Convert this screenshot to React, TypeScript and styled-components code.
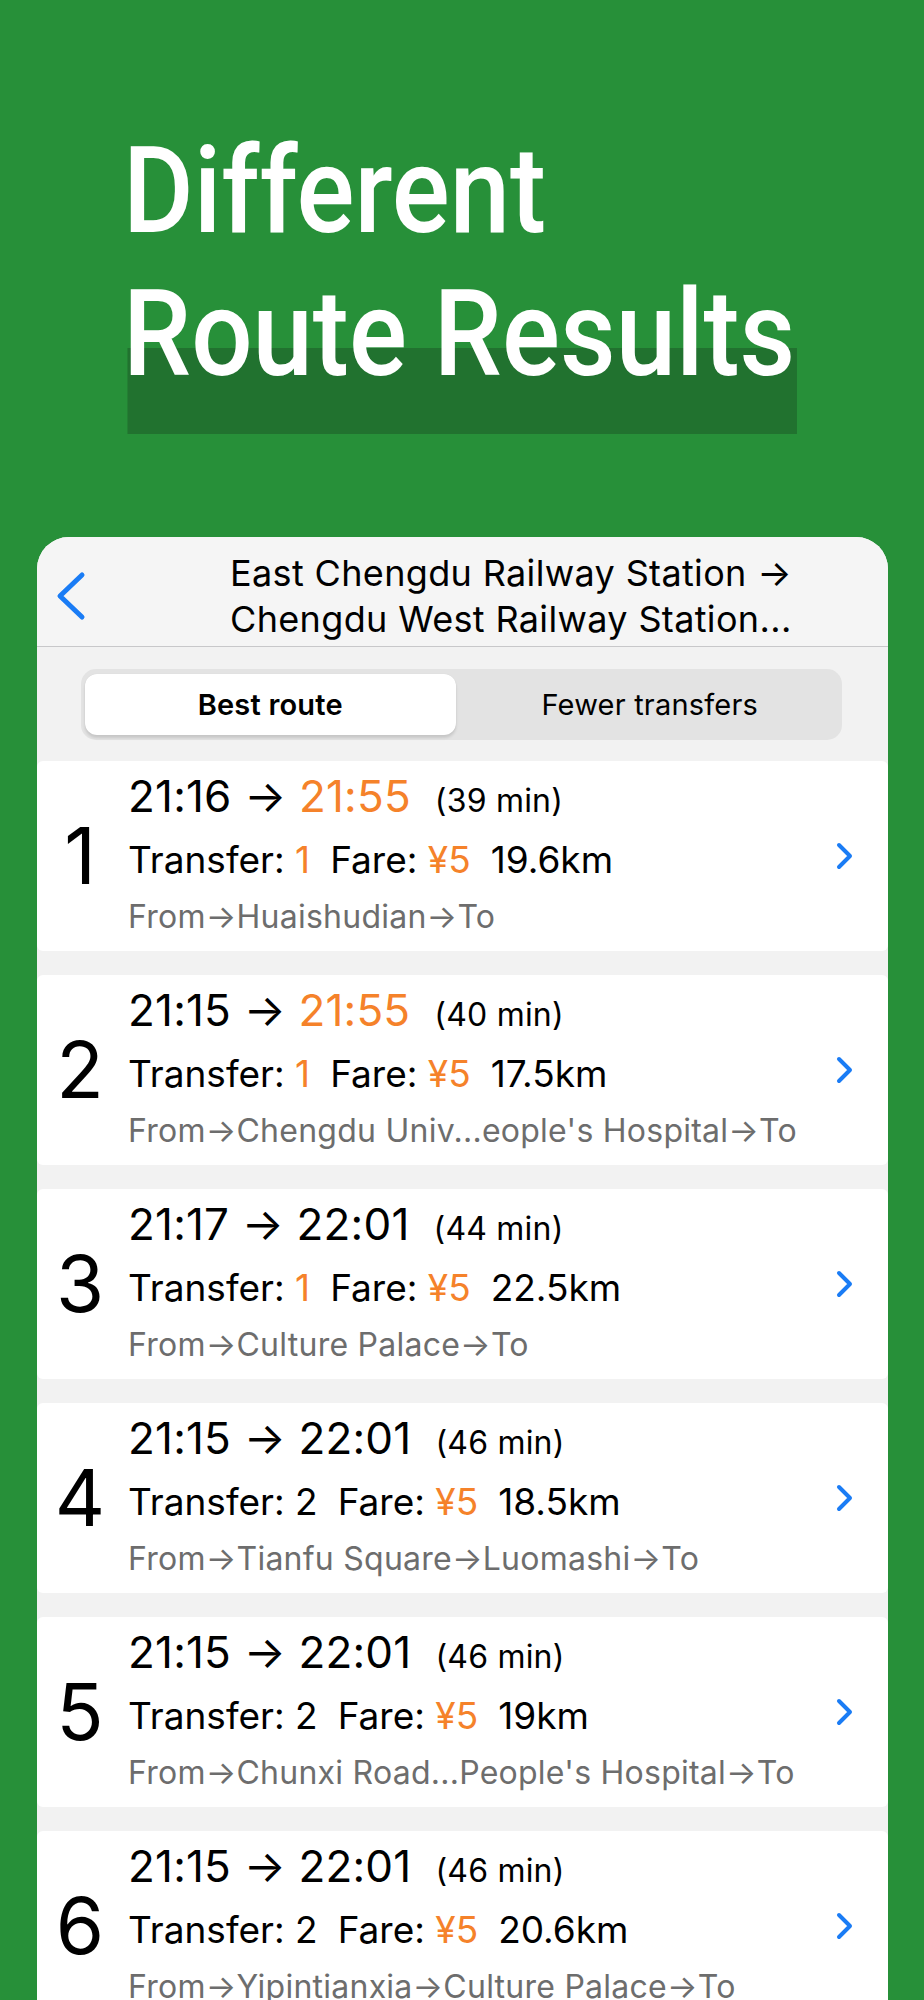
import React from "react";
import styled, { createGlobalStyle } from "styled-components";

const GlobalStyle = createGlobalStyle`
  html, body { margin: 0; padding: 0; }
  body { background: #279039; font-family: Inter, "Noto Sans", sans-serif; }
  * { box-sizing: border-box; }
`;

const Page = styled.div`
  width: 924px;
  height: 2000px;
  overflow: hidden;
  background: #279039;
  display: flex;
  flex-direction: column;
`;

const Hero = styled.div`
  padding: 120px 0 0 123px;
  height: 537px;
`;

const HeroTitle = styled.h1`
  margin: 0;
  font-family: Roboto, "Liberation Sans", Arial, sans-serif;
  font-weight: 500;
  font-size: 121px;
  line-height: 143px;
  color: #ffffff;
  display: flex;
  flex-direction: column;
  align-items: flex-start;
  transform: scaleX(0.895);
  transform-origin: left top;
`;

const HeroLine = styled.span<{ $marked?: boolean }>`
  position: relative;
  display: inline-block;
  white-space: nowrap;
  z-index: 0;
  &::before {
    content: "";
    display: ${(p) => (p.$marked ? "block" : "none")};
    position: absolute;
    left: 5px;
    right: -2px;
    top: 85px;
    height: 86px;
    background: #21722f;
    z-index: -1;
  }
`;

const Card = styled.div`
  margin: 0 36px 0 37px;
  flex: 1;
  background: #f2f2f2;
  border-radius: 32px 32px 0 0;
  overflow: hidden;
  display: flex;
  flex-direction: column;
`;

const NavBar = styled.div`
  display: flex;
  align-items: center;
  background: #f5f5f5;
  border-bottom: 1.5px solid #c8c8ca;
  padding: 13px 0 4px 18px;
`;

const BackButton = styled.div`
  width: 175px;
  display: flex;
  align-items: center;
`;

const NavTitle = styled.div`
  font-size: 36px;
  line-height: 46px;
  color: #000;
  letter-spacing: 0.35px;
  white-space: nowrap;
`;

const SegmentWrap = styled.div`
  padding: 22px 46px 21px 44px;
`;

const Segmented = styled.div`
  display: grid;
  grid-template-columns: 1fr 1fr;
  height: 71px;
  background: #e3e3e3;
  border-radius: 15px;
  padding: 5px 4px;
`;

const Segment = styled.div<{ $active?: boolean }>`
  display: flex;
  align-items: center;
  justify-content: center;
  border-radius: 12px;
  font-size: 29px;
  font-weight: ${(p) => (p.$active ? 600 : 400)};
  color: #000;
  background: ${(p) => (p.$active ? "#ffffff" : "transparent")};
  box-shadow: ${(p) => (p.$active ? "0 3px 3px rgba(0,0,0,0.12), 0 0 1px rgba(0,0,0,0.1)" : "none")};
  margin-right: ${(p) => (p.$active ? "6px" : "0")};
  letter-spacing: 0.2px;
`;

const List = styled.div`
  display: flex;
  flex-direction: column;
  gap: 24px;
`;

const Row = styled.div`
  height: 190px;
  background: #ffffff;
  border-radius: 6px;
  display: flex;
  align-items: center;
`;

const Index = styled.div`
  width: 86px;
  flex: none;
  text-align: center;
  font-size: 78px;
  line-height: 1;
  color: #000;
  margin-right: 5px;
`;

const Info = styled.div`
  flex: 1;
  display: flex;
  flex-direction: column;
  margin-top: -2px;
`;

const TimeLine = styled.div`
  font-size: 44px;
  line-height: 56px;
  color: #000;
  white-space: nowrap;
  letter-spacing: 0.2px;
`;

const Duration = styled.span`
  font-size: 32px;
  margin-left: 24px;
  letter-spacing: 0.2px;
`;

const StatsLine = styled.div`
  font-size: 37px;
  line-height: 62px;
  color: #000;
  white-space: nowrap;
  letter-spacing: 0px;
`;

const Stat = styled.span`
  & + & { margin-left: 20px; }
`;

const Accent = styled.span<{ $on?: boolean }>`
  color: ${(p) => (p.$on ? "#f5822a" : "inherit")};
`;

const PathLine = styled.div`
  font-size: 32px;
  line-height: 52px;
  color: #6d6d6d;
  white-space: nowrap;
  letter-spacing: 0.25px;
`;

const Chevron = styled.div`
  width: 53px;
  flex: none;
  display: flex;
  align-items: center;
`;

type Route = {
  dep: string;
  arr: string;
  arrLate: boolean;
  dur: string;
  transfer: string;
  transferHi: boolean;
  km: string;
  path: string;
};

const routes: Route[] = [
  { dep: "21:16", arr: "21:55", arrLate: true, dur: "39 min", transfer: "1", transferHi: true, km: "19.6km", path: "From→Huaishudian→To" },
  { dep: "21:15", arr: "21:55", arrLate: true, dur: "40 min", transfer: "1", transferHi: true, km: "17.5km", path: "From→Chengdu Univ...eople's Hospital→To" },
  { dep: "21:17", arr: "22:01", arrLate: false, dur: "44 min", transfer: "1", transferHi: true, km: "22.5km", path: "From→Culture Palace→To" },
  { dep: "21:15", arr: "22:01", arrLate: false, dur: "46 min", transfer: "2", transferHi: false, km: "18.5km", path: "From→Tianfu Square→Luomashi→To" },
  { dep: "21:15", arr: "22:01", arrLate: false, dur: "46 min", transfer: "2", transferHi: false, km: "19km", path: "From→Chunxi Road...People's Hospital→To" },
  { dep: "21:15", arr: "22:01", arrLate: false, dur: "46 min", transfer: "2", transferHi: false, km: "20.6km", path: "From→Yipintianxia→Culture Palace→To" },
];

export default function App() {
  return (
    <>
      <GlobalStyle />
      <Page>
        <Hero>
          <HeroTitle>
            <HeroLine>Different</HeroLine>
            <HeroLine $marked>Route Results</HeroLine>
          </HeroTitle>
        </Hero>
        <Card>
          <NavBar>
            <BackButton>
              <svg width="32" height="50" viewBox="0 0 32 50" fill="none">
                <path d="M27 4 L5 25 L27 46" stroke="#1a7cf5" strokeWidth="5" strokeLinecap="round" strokeLinejoin="round" />
              </svg>
            </BackButton>
            <NavTitle>
              East Chengdu Railway Station →
              <br />
              Chengdu West Railway Station...
            </NavTitle>
          </NavBar>
          <SegmentWrap>
            <Segmented>
              <Segment $active>Best route</Segment>
              <Segment>Fewer transfers</Segment>
            </Segmented>
          </SegmentWrap>
          <List>
            {routes.map((r, i) => (
              <Row key={i}>
                <Index>{i + 1}</Index>
                <Info>
                  <TimeLine>
                    {r.dep} → <Accent $on={r.arrLate}>{r.arr}</Accent>
                    <Duration>({r.dur})</Duration>
                  </TimeLine>
                  <StatsLine>
                    <Stat>
                      Transfer: <Accent $on={r.transferHi}>{r.transfer}</Accent>
                    </Stat>
                    <Stat>
                      Fare: <Accent $on>¥5</Accent>
                    </Stat>
                    <Stat>{r.km}</Stat>
                  </StatsLine>
                  <PathLine>{r.path}</PathLine>
                </Info>
                <Chevron>
                  <svg width="20" height="28" viewBox="0 0 20 28" fill="none">
                    <path d="M4 3 L15 14 L4 25" stroke="#1a7cf5" strokeWidth="4" strokeLinecap="round" strokeLinejoin="round" />
                  </svg>
                </Chevron>
              </Row>
            ))}
          </List>
        </Card>
      </Page>
    </>
  );
}
